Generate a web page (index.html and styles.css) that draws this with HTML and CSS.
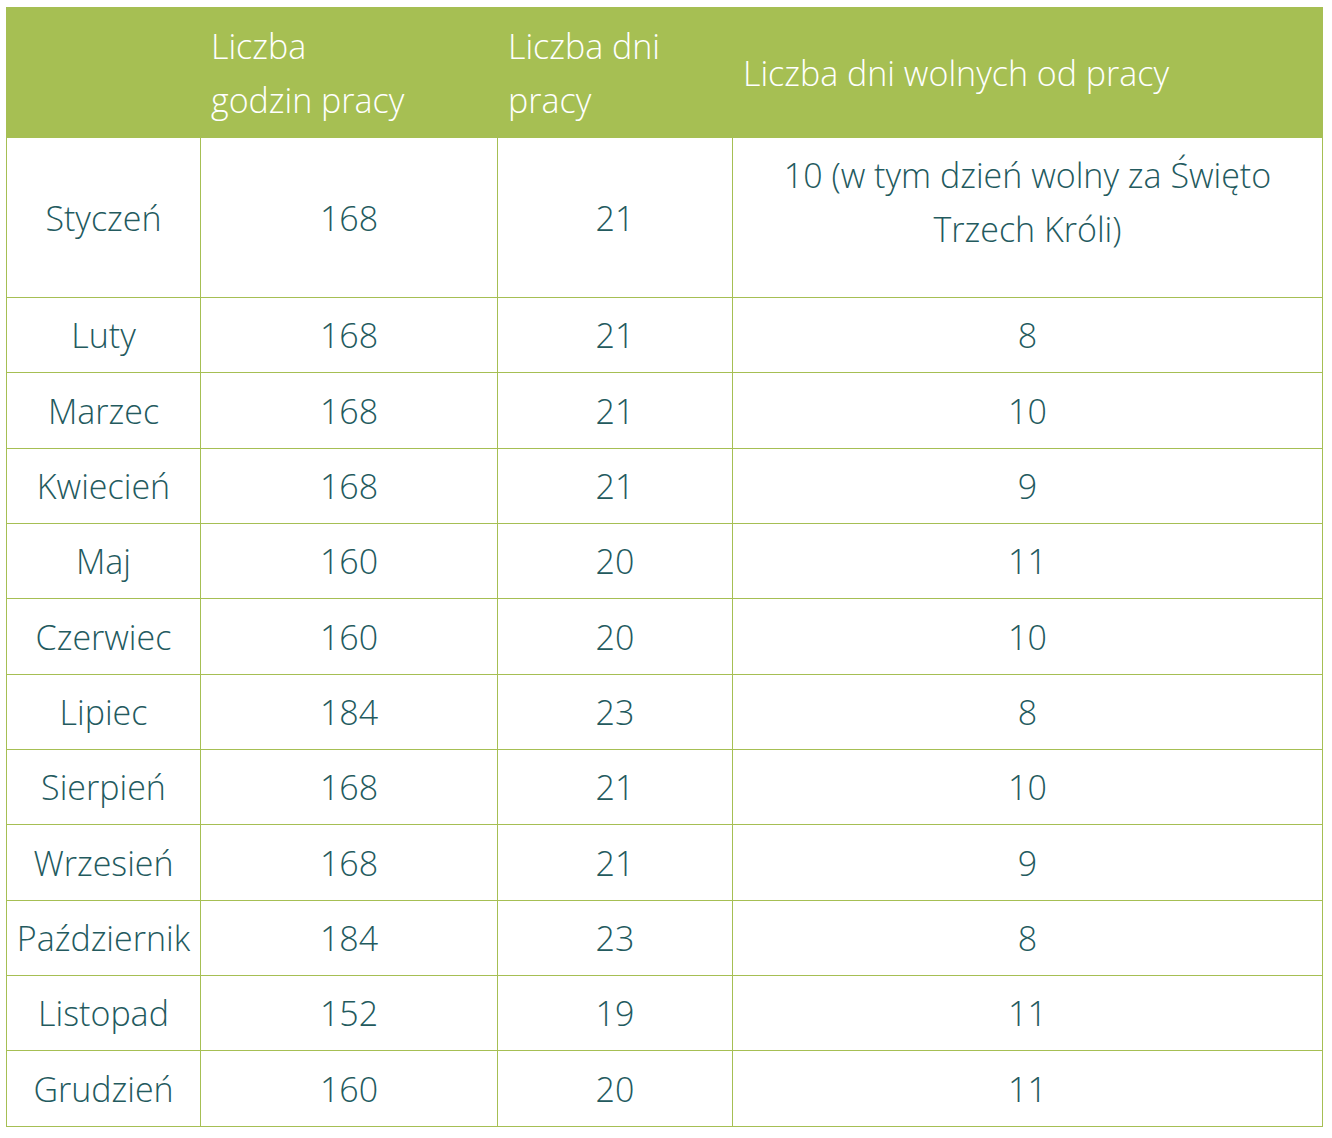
FILE: index.html
```html
<!DOCTYPE html>
<html lang="pl">
<head>
<meta charset="utf-8">
<title>Wymiar czasu pracy</title>
<link rel="stylesheet" href="styles.css">
</head>
<body>
<table class="hours">
  <colgroup>
    <col class="c-month">
    <col class="c-hours">
    <col class="c-days">
    <col class="c-free">
  </colgroup>
  <thead>
    <tr>
      <th></th>
      <th>Liczba<br>godzin pracy</th>
      <th>Liczba dni<br>pracy</th>
      <th>Liczba dni wolnych od pracy</th>
    </tr>
  </thead>
  <tbody>
    <tr class="tall"><td>Styczeń</td><td>168</td><td>21</td><td class="top">10 (w tym dzień wolny za Święto Trzech Króli)</td></tr>
    <tr><td>Luty</td><td>168</td><td>21</td><td>8</td></tr>
    <tr><td>Marzec</td><td>168</td><td>21</td><td>10</td></tr>
    <tr><td>Kwiecień</td><td>168</td><td>21</td><td>9</td></tr>
    <tr><td>Maj</td><td>160</td><td>20</td><td>11</td></tr>
    <tr><td>Czerwiec</td><td>160</td><td>20</td><td>10</td></tr>
    <tr><td>Lipiec</td><td>184</td><td>23</td><td>8</td></tr>
    <tr><td>Sierpień</td><td>168</td><td>21</td><td>10</td></tr>
    <tr><td>Wrzesień</td><td>168</td><td>21</td><td>9</td></tr>
    <tr><td>Październik</td><td>184</td><td>23</td><td>8</td></tr>
    <tr><td>Listopad</td><td>152</td><td>19</td><td>11</td></tr>
    <tr><td>Grudzień</td><td>160</td><td>20</td><td>11</td></tr>
  </tbody>
</table>
</body>
</html>
```
FILE: styles.css
```css
html, body {
  margin: 0;
  background: #ffffff;
}
body {
  padding: 7px 0 0 6px;
  font-family: "Open Sans", "Liberation Sans", sans-serif;
}
.hours {
  border-collapse: collapse;
  table-layout: fixed;
  width: 1316px;
  font-size: 34px;
  font-weight: 300;
  line-height: 54px;
  color: #235a5e;
}
.c-month { width: 194px; }
.c-hours { width: 297px; }
.c-days { width: 235px; }
.c-free { width: 590px; }
.hours th {
  background: #a6bf53;
  color: #ffffff;
  font-weight: 300;
  text-align: left;
  vertical-align: middle;
  height: 130px;
  padding: 0 10px;
  box-sizing: border-box;
  border: 1px solid #a6bf53;
}
.hours td {
  border: 1px solid #a6bf53;
  text-align: center;
  vertical-align: middle;
  height: 75.35px;
  padding: 0 2px;
  box-sizing: border-box;
}
.hours tr.tall td {
  height: 160px;
}
.hours td.top {
  vertical-align: top;
  padding: 10px 11px 0;
}
```
